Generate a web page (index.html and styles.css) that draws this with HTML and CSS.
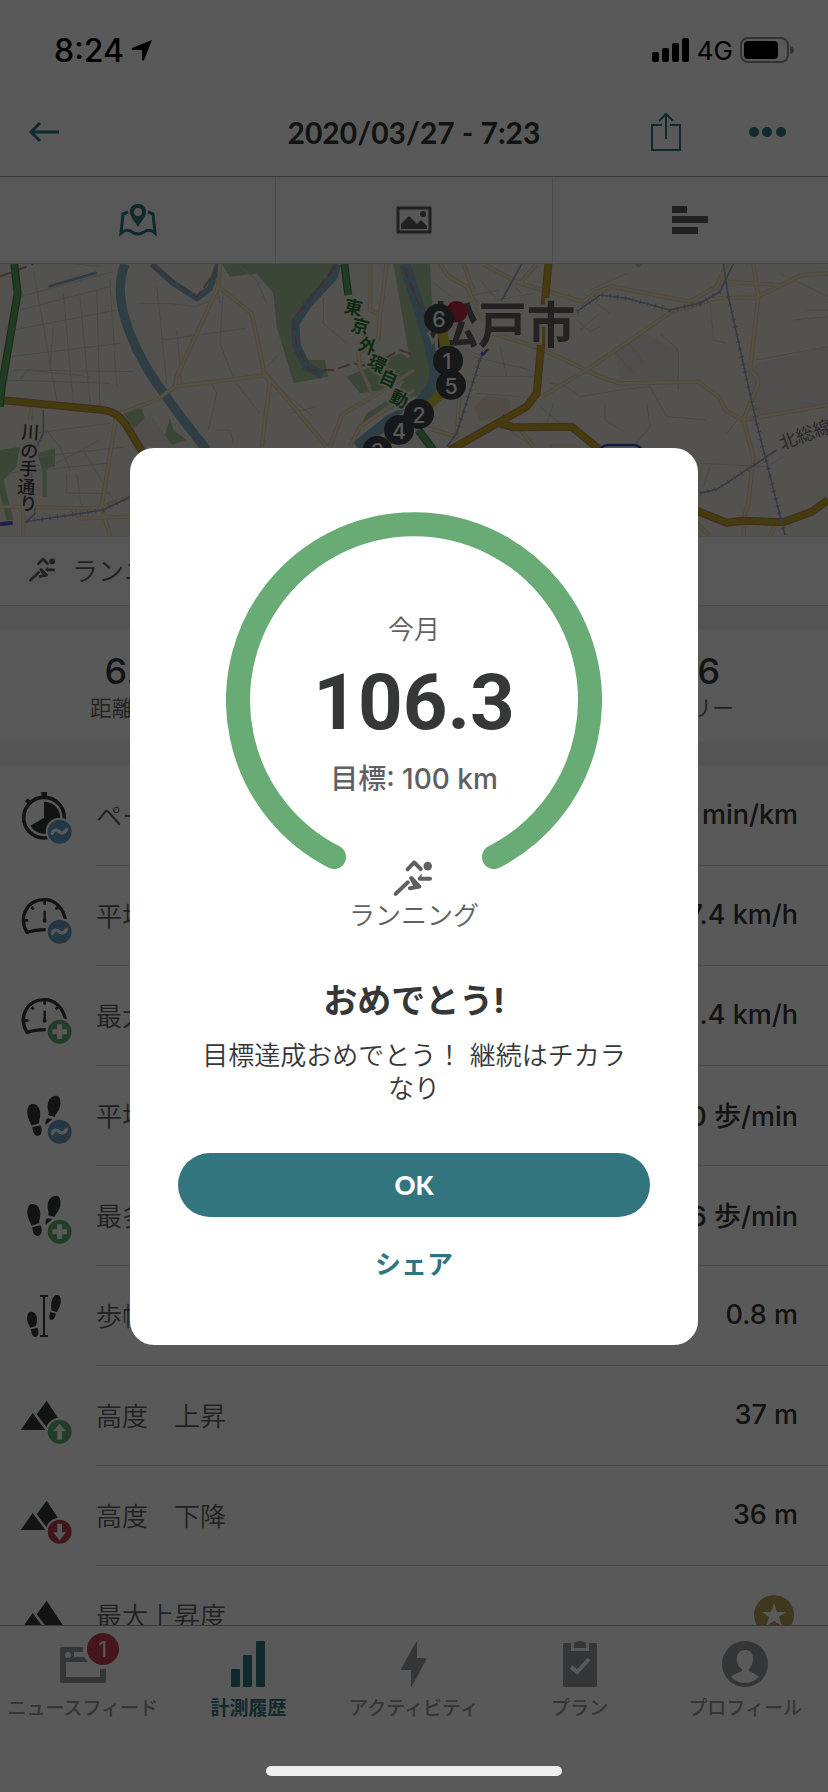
FILE: index.html
```html
<!DOCTYPE html>
<html lang="ja">
<head>
<meta charset="utf-8">
<meta name="viewport" content="width=device-width, initial-scale=1">
<title>2020/03/27 - 7:23</title>
<link rel="stylesheet" href="styles.css">
</head>
<body>
<svg class="defs" aria-hidden="true">
  <defs>
    <symbol id="runner" viewBox="30 24 130 120">
      <g fill="none" stroke="currentColor" stroke-width="12" stroke-linecap="round" stroke-linejoin="round">
        <path d="M77 58 97 37 117 57M114 86H145M41 132 78 97M88 84 113 110 84 115"/>
      </g>
      <path fill="currentColor" d="M108 86 120 70V90ZM82 84 92 80 118 108 86 118 94 108Z"/>
      <circle cx="138" cy="48" r="13" fill="currentColor"/>
    </symbol>
    <symbol id="wave" viewBox="0 0 84 84">
      <circle cx="42" cy="42" r="39" fill="#679dc5" stroke="#fff" stroke-width="6"/>
      <path d="M20 47C22 37 32 35 39 41S56 49 63 35" fill="none" stroke="#fff" stroke-width="10" stroke-linecap="round"/>
    </symbol>
    <symbol id="plus" viewBox="0 0 84 84">
      <circle cx="42" cy="42" r="39" fill="#66ab73" stroke="#fff" stroke-width="6"/>
      <path d="M42 20V64M20 42H64" stroke="#fff" stroke-width="15"/>
    </symbol>
    <symbol id="gauge" viewBox="0 0 162 174">
      <path d="M77 128Q44 129 21 136C-6 91 20 38 74 38 104 38 129 62 136 97" fill="none" stroke="currentColor" stroke-width="10"/>
      <path d="M74 42V53M34 60 41 67M114 60 107 67M14 100H25" stroke="currentColor" stroke-width="8"/>
      <path d="M74 71V101" stroke="currentColor" stroke-width="7"/>
      <circle cx="74" cy="101" r="6" fill="currentColor"/>
    </symbol>
    <symbol id="steps" viewBox="0 0 162 174">
      <g fill="currentColor">
        <path d="M36 51C50 49 60 61 61 80 61 92 57 100 57 109L34 116C31 103 22 95 22 76 22 62 27 52 36 51Z"/>
        <path d="M37 121 61 115C68 126 67 146 53 147 42 147 38 135 37 121Z"/>
        <path d="M109 26C119 27 123 38 121 54 118 72 108 78 104 90L85 85C88 74 81 68 83 53 85 36 96 25 109 26Z"/>
        <path d="M82 94 97 96 77 114C75 106 77 99 82 94Z"/>
      </g>
    </symbol>
    <symbol id="peaks" viewBox="0 0 162 174">
      <path fill="currentColor" d="M2 129 38 78 76 129ZM50 82 80 41 138 129H86Z"/>
    </symbol>
    <path id="lanes" d="M660 12 655 80 530 350 525 380 470 420 360 460M655 80 755 160 795 350 810 365 785 560M525 380 800 345 980 560M1110 12V150L1140 165 1160 12M1140 165 1135 240 1075 280 1080 320 1115 400M990 560 1025 465 1150 390 1242 330M1050 560 1080 500 1242 390M95 440 90 480M350 460 305 740 330 828M0 740 300 745 390 710M210 740 240 775 390 770M70 740V828M25 300 10 400M1320 12 1345 50 1400 80 1450 180M1390 12 1420 90M1450 12 1560 70 1750 125 1790 95 1835 80 2070 125 2150 80 2180 12M1560 70 1610 12M1625 410 1760 330 2015 155 2150 115 2270 112 2405 45 2484 40M2170 65 2340 75M2260 12 2275 110 2250 330 2270 350 2275 370 2230 480 2260 590 2245 730 2235 760 2230 828M1620 265 1800 350 1860 370 2095 365 2155 410 2180 455 2230 480 2484 435M1480 220 1620 265M1285 505 1370 530 1380 380M2090 790 2130 828M2330 790 2310 828M1555 500 1600 560M1650 560 1730 560"/>
    <path id="highways" d="M0 420 310 450Q350 455 375 490L430 580M1645 12 1630 180 1610 400 1580 440 1350 570M1500 490 1540 502 1715 500 1800 570M2060 740 2180 788 2230 782 2350 787 2435 755 2484 720"/>
    <path id="motorways" d="M43 12 53 100 5 380 0 440M1033 12 1045 105M1255 510 1300 570"/>
  </defs>
</svg>

<div class="app">
  <header class="top">
    <div class="status">
      <div class="status-left">
        <span class="clock">8:24</span>
        <svg width="22" height="22" viewBox="0 0 22 22"><path fill="#000" d="M21 1 13 21Q12 22 11 21V11H1Q0 10 1 9Z"/></svg>
      </div>
      <div class="status-right">
        <svg width="38" height="24" viewBox="0 0 38 24"><rect y="14" width="7" height="10" rx="2"/><rect x="10" y="10" width="7" height="14" rx="2"/><rect x="20" y="5" width="7" height="19" rx="2"/><rect x="30" width="7" height="24" rx="2"/></svg>
        <span class="net">4G</span>
        <svg width="54" height="26" viewBox="0 0 54 26"><rect x="1" y="1" width="47" height="24" rx="7" fill="none" stroke="#929292" stroke-width="2"/><rect x="4" y="4" width="34" height="18" rx="4"/><path fill="#929292" d="M50 9Q54 10 54 13T50 17Z"/></svg>
      </div>
    </div>
    <nav class="navbar">
      <button class="icon-btn" aria-label="戻る"><svg width="32" height="22" viewBox="0 0 32 22"><path d="M31 11H3M12 2 3 11 12 20" fill="none" stroke="currentColor" stroke-width="3"/></svg></button>
      <h1 class="title">2020/03/27 - 7:23</h1>
      <div class="actions">
        <button class="icon-btn" aria-label="共有"><svg width="30" height="40" viewBox="0 0 30 40"><path d="M11 13H1V38H29V13H19M15 27V2M8 9 15 2 22 9" fill="none" stroke="currentColor" stroke-width="2"/></svg></button>
        <button class="icon-btn" aria-label="メニュー"><svg width="37" height="12" viewBox="0 0 37 12"><g fill="currentColor"><circle cx="5" cy="6" r="5"/><circle cx="18" cy="6" r="5"/><circle cx="32" cy="6" r="5"/></g></svg></button>
      </div>
    </nav>
  </header>

  <div class="tabs">
    <button class="tab tab-on" aria-label="マップ"><svg width="38" height="34" viewBox="0 0 38 34"><path d="M9 9 4 11 2 30Q8 25 13 29 19 33 25 29 30 25 36 30L34 11 29 9" fill="none" stroke="currentColor" stroke-width="3"/><path fill="currentColor" fill-rule="evenodd" d="M19 1C24 1 27 4 27 9 27 14 21 20 19 24 17 20 11 14 11 9 11 4 14 1 19 1ZM19 5A4 4 0 1 0 19 13 4 4 0 1 0 19 5Z"/></svg></button>
    <button class="tab" aria-label="写真"><svg width="36" height="28" viewBox="0 0 36 28"><rect x="2" y="2" width="32" height="24" fill="none" stroke="currentColor" stroke-width="3"/><circle cx="27" cy="8" r="3" fill="currentColor"/><path fill="currentColor" d="M5 23V18L13 10 21 18 25 14 31 20V23Z"/></svg></button>
    <button class="tab" aria-label="グラフ"><svg width="38" height="28" viewBox="0 0 38 28"><path fill="currentColor" d="M1 0H16V7H1ZM1 10H37V17H1ZM1 21H27V28H1Z"/></svg></button>
  </div>

  <svg class="map" viewBox="0 12 2484 816" preserveAspectRatio="xMidYMid slice" role="img" aria-label="地図">
    <rect y="12" width="2484" height="816" fill="#efebe2"/>
    <g fill="#a9c99c">
      <path d="M665 12H1015L1000 55 925 150 890 210 905 300 975 300 985 350 880 370 860 300 830 200 820 100 770 40 690 50Z"/>
      <path d="M1180 12H1290L1305 300 1290 400 1240 410 1080 500 1100 460 1180 410 1235 330Z"/>
      <path d="M1040 350 1200 280 1240 300V350L1150 390 1080 400Z"/>
      <path d="M370 460 425 445 440 490 400 505ZM490 540 510 475 520 510 560 540 500 560ZM110 580 165 565V620L140 625V710H128V630ZM0 570 60 560 50 620 10 660 30 740 40 780 20 780 0 700ZM1905 12H1930L1915 25Z"/>
    </g>
    <path fill="#e2dfdb" d="M1840 270 1940 220 2035 270V360H1860ZM2270 310 2484 260V430L2270 470 2245 340ZM385 520 450 460 520 560H420Z"/>
    <path fill="#e7d8c8" d="M1420 440 1460 405 1530 420V460L1440 485Z"/>
    <g fill="none" stroke="#d1cdc6" stroke-width="3">
      <path d="M60 110 340 35M60 150 330 80M40 210 350 150M30 290 360 250M40 330 400 335M20 360 330 370M100 30 170 420M190 100 220 430M160 200 150 330M240 110 270 430M290 90 300 440M330 60 350 380M60 360 80 330 270 350M470 80 500 370M530 210 545 370M420 130 510 130 585 140 660 110M490 240 735 205M660 130 640 20M670 90 660 250 700 355M635 372 650 400 625 510M710 370 740 410 780 460M650 510H690L700 550M210 10 300 20M100 520 330 490M130 500 180 560 210 630M20 640 320 610M200 640V700H330M230 640 250 780M150 620 300 540M120 590 380 560M250 570 340 720M970 110V190L1040 250M800 320 850 270M820 370 940 470M870 460 950 440M720 20 770 60 800 130"/>
      <path d="M1290 60 1420 160M1340 30 1440 130 1600 100M1440 60 1560 200M1500 30 1580 120M1400 110 1500 90M1420 290 1590 330M1440 350H1620M1500 260 1520 350M1430 400 1560 410M1330 240 1450 290M1600 520 1640 490 1660 430M1740 210 1800 160M1730 180 1770 215 1800 200M1750 100 1830 160M1770 90 1880 40M1840 270 1900 340M1880 240 1930 310M1980 220 2035 270V390M1940 430 1950 500 1900 560M1650 370 1700 380 1740 410 1860 390 1950 380 2000 470 2120 480M2130 110 2140 240 2180 250M2150 80 2200 60M2270 300 2484 260M2340 40 2484 110M2220 470 2180 520M2300 620 2350 590M2100 610 2300 620M2130 620 2110 680M1500 440 1540 520 1600 560M1620 440 1680 490M1815 430V480L1870 515M2420 150H2484M2380 180 2484 170"/>
    </g>
    <g fill="none" stroke="#87afc6" stroke-linejoin="round">
      <path d="M375 12Q350 70 370 160 400 270 470 370T620 570" stroke-width="28"/>
      <path d="M145 80 290 38" stroke-width="9"/>
      <path d="M455 12 520 70 590 115 630 85 655 12" stroke-width="18"/>
      <path d="M1010 12 1000 50 925 130 885 190 890 260 920 320 970 345" stroke-width="26"/>
      <path d="M1215 12Q1240 90 1265 170T1305 330Q1310 420 1170 480L1070 560" stroke-width="34"/>
    </g>
    <g fill="none" stroke="#b98a88" stroke-width="6" stroke-dasharray="36 14">
      <path d="M0 50 100 12M455 18 590 112 660 15M1005 20 880 180 890 260 930 330 1000 330 1060 310 1110 320 1200 270 1242 285M1210 20 1285 200"/>
    </g>
    <g fill="none" stroke-linejoin="round">
      <use href="#lanes" stroke="#e0c8ac" stroke-width="13"/>
      <use href="#lanes" stroke="#efe4c2" stroke-width="8"/>
      <use href="#highways" stroke="#b98a52" stroke-width="24"/>
      <use href="#highways" stroke="#c8a52c" stroke-width="17"/>
      <use href="#motorways" stroke="#478a4d" stroke-width="24"/>
      <use href="#motorways" stroke="#5fa964" stroke-width="16"/>
    </g>
    <g fill="none" stroke="#9aa6c2" stroke-width="5">
      <path d="M130 450V520L90 600 105 760 80 785 310 750 390 710M1565 12 1500 130M1460 240 1440 300 1370 520 1340 560M1730 155 1800 105 1880 115 2010 150 2100 130 2160 95 2200 12M2170 12 2185 110 2270 490 2355 825M2100 700 2150 688 2270 610 2330 570"/>
      <path stroke-width="14" stroke-dasharray="3 20" d="M80 785 310 750 390 710M1440 300 1370 520M1730 155 1800 105 1880 115 2010 150 2100 130 2160 95M2185 110 2270 490 2355 825M2100 700 2150 688 2270 610"/>
    </g>
    <path fill="none" stroke="#5b62cf" stroke-width="12" d="M0 793 38 788M1445 285 1462 265"/>
    <rect x="1790" y="555" width="145" height="90" rx="36" fill="#e6ebf5" stroke="#2b55bf" stroke-width="7"/>
    <text class="map-city" x="1288" y="250">松戸市</text>
    <g class="map-road">
      <text x="90 87 84 78 84" y="511 567 620 675 725" rotate="3">川の手通り</text>
    </g>
    <g class="map-road map-road-green">
      <text x="1057 1077 1097 1125 1160 1192 1222" y="132 188 243 293 338 398 450" rotate="12 14 20 26 24 26 28">東京外環自動車</text>
    </g>
    <text class="map-rail" transform="rotate(-20 2410 525)" x="2334" y="545">北総線</text>
    <path d="M1320 180 1345 300 1352 375 1255 465 1195 510 1132 575" fill="none" stroke="#cfc534" stroke-width="30"/>
    <circle cx="1370" cy="155" r="32" fill="#bd2b41"/>
    <g fill="#41464a">
      <circle cx="1132" cy="573" r="45"/><circle cx="1197" cy="510" r="45"/><circle cx="1257" cy="462" r="45"/><circle cx="1344" cy="302" r="45"/><circle cx="1353" cy="375" r="45"/><circle cx="1317" cy="176" r="45"/>
    </g>
    <g class="map-pin">
      <text x="1132" y="573">3</text><text x="1197" y="512">4</text><text x="1257" y="464">2</text><text x="1341" y="304">1</text><text x="1353" y="377">5</text><text x="1317" y="178">6</text>
    </g>
  </svg>

  <div class="activity">
    <svg width="29" height="27"><use href="#runner"/></svg>
    <span>ランニング</span>
  </div>

  <dl class="stats">
    <div class="stat"><dd>6.13</dd><dt>距離 (km)</dt></div>
    <div class="stat"></div>
    <div class="stat"><dd>416</dd><dt>カロリー</dt></div>
  </dl>

  <ul class="list">
    <li class="row">
      <svg class="row-icon" viewBox="0 0 162 174"><circle cx="72" cy="92" r="61" fill="none" stroke="currentColor" stroke-width="11"/><path fill="currentColor" d="M64 15H81V34H64ZM72 44A48 48 0 1 1 31 116L72 92Z"/><path d="M19 38 30 49" stroke="currentColor" stroke-width="12"/><use href="#wave" x="77" y="92" width="84" height="84"/></svg>
      <div class="row-body"><span>ペース</span><b>8:07 min/km</b></div>
    </li>
    <li class="row">
      <svg class="row-icon" viewBox="0 0 162 174"><use href="#gauge"/><use href="#wave" x="77" y="92" width="84" height="84"/></svg>
      <div class="row-body"><span>平均速度</span><b>7.4 km/h</b></div>
    </li>
    <li class="row">
      <svg class="row-icon" viewBox="0 0 162 174"><use href="#gauge"/><use href="#plus" x="77" y="92" width="84" height="84"/></svg>
      <div class="row-body"><span>最大速度</span><b>11.4 km/h</b></div>
    </li>
    <li class="row">
      <svg class="row-icon" viewBox="0 0 162 174"><use href="#steps"/><use href="#wave" x="77" y="92" width="84" height="84"/></svg>
      <div class="row-body"><span>平均歩数</span><b>150 歩/min</b></div>
    </li>
    <li class="row">
      <svg class="row-icon" viewBox="0 0 162 174"><use href="#steps"/><use href="#plus" x="77" y="92" width="84" height="84"/></svg>
      <div class="row-body"><span>最多歩数</span><b>176 歩/min</b></div>
    </li>
    <li class="row">
      <svg class="row-icon" viewBox="0 0 162 174"><g fill="currentColor"><path d="M32 74C44 73 52 86 51 99 51 107 48 111 48 117L30 122C28 112 21 108 21 94 21 82 25 75 32 74Z"/><path d="M33 127 52 122C58 134 55 149 46 150 36 149 34 138 33 127Z"/><path d="M111 24C122 24 124 38 122 49 120 61 113 68 111 76L94 70C95 63 92 58 94 47 97 32 103 24 111 24Z"/><path d="M92 75 108 80C105 91 101 98 94 99 86 98 86 84 92 75Z"/></g><path d="M72 27V147M60 27H84M60 147H84" fill="none" stroke="currentColor" stroke-width="6"/></svg>
      <div class="row-body"><span>歩幅</span><b>0.8 m</b></div>
    </li>
    <li class="row">
      <svg class="row-icon" viewBox="0 0 162 174"><use href="#peaks"/><circle cx="119" cy="134" r="39" fill="#66ab73" stroke="#fff" stroke-width="6"/><path fill="#fff" d="M119 110 138 133H126V158H112V133H100Z"/></svg>
      <div class="row-body"><span>高度　上昇</span><b>37 m</b></div>
    </li>
    <li class="row">
      <svg class="row-icon" viewBox="0 0 162 174"><use href="#peaks"/><circle cx="119" cy="134" r="39" fill="#ba3e50" stroke="#fff" stroke-width="6"/><path fill="#fff" d="M119 160 138 136H126V110H112V136H100Z"/></svg>
      <div class="row-body"><span>高度　下降</span><b>36 m</b></div>
    </li>
    <li class="row">
      <svg class="row-icon" viewBox="0 0 162 174"><use href="#peaks"/></svg>
      <div class="row-body"><span>最大上昇度</span><svg class="star" viewBox="0 0 40 40"><circle cx="20" cy="20" r="20" fill="#b89f5a"/><path fill="#fff" d="M20 8 23 17H32L25 22 28 31 20 26 12 31 15 22 8 17H17Z"/></svg></div>
    </li>
  </ul>

  <nav class="tabbar">
    <a class="item" href="#feed"><span class="item-icon"><svg viewBox="0 0 46 46"><path fill="currentColor" fill-rule="evenodd" d="M2 6H44Q46 6 46 8V40Q46 42 44 42H2Q0 42 0 40V8Q0 6 2 6ZM6 21V36H40V21ZM14 11V16H40V11Z"/><circle cx="8" cy="14" r="3" fill="#fff"/></svg><em class="badge">1</em></span>ニュースフィード</a>
    <a class="item item-on" href="#history"><span class="item-icon"><svg viewBox="0 0 46 46"><g fill="currentColor"><rect x="6" y="28" width="9" height="18" rx="1"/><rect x="18" y="14" width="9" height="32" rx="1"/><rect x="31" width="9" height="46" rx="1"/></g></svg></span>計測履歴</a>
    <a class="item" href="#activity"><span class="item-icon"><svg viewBox="0 0 46 46"><path fill="currentColor" d="M25 1 10 28Q10 29 11 29H20V45Q20 46 21 45L35 19Q36 17 34 17H26V1Z"/></svg></span>アクティビティ</a>
    <a class="item" href="#plan"><span class="item-icon"><svg viewBox="0 0 46 46"><path fill="currentColor" d="M8 2H14V10H32V2H38Q40 2 40 4V44Q40 46 38 46H8Q6 46 6 44V4Q6 2 8 2ZM17 2Q23-2 29 2V7H17Z"/><path d="M14 26 20 31 32 18" fill="none" stroke="#fff" stroke-width="4"/></svg></span>プラン</a>
    <a class="item" href="#profile"><span class="item-icon"><svg viewBox="0 0 46 46"><circle cx="23" cy="23" r="23" fill="currentColor"/><path fill="#fff" d="M23 9C29 9 31 13 31 18 31 23 29 26 27 28V30Q32 32 37 36 31 42 23 42T9 36Q14 32 20 30V28C17 26 15 23 15 18 15 13 17 9 23 9Z"/></svg></span>プロフィール</a>
  </nav>
</div>

<div class="overlay">
  <section class="modal" role="dialog" aria-modal="true" aria-labelledby="dlg-title">
    <div class="goal">
      <svg class="ring" viewBox="0 0 376 376"><path d="M108 345A176 176 0 1 1 268 345" fill="none" stroke="#69ab74" stroke-width="24" stroke-linecap="round"/></svg>
      <div class="goal-text">
        <p class="month">今月</p>
        <p class="amount">106.3</p>
        <p class="target">目標: 100 km</p>
        <svg class="goal-icon" width="43" height="40"><use href="#runner"/></svg>
        <p class="sport">ランニング</p>
      </div>
    </div>
    <h2 id="dlg-title">おめでとう!</h2>
    <p class="message">目標達成おめでとう！ 継続はチカラなり</p>
    <button class="ok">OK</button>
    <button class="share">シェア</button>
  </section>
</div>
<div class="home-bar"></div>
</body>
</html>
```
FILE: styles.css
```css
* { box-sizing: border-box; margin: 0; padding: 0; }

body {
  font-family: Inter, "Noto Sans CJK JP", sans-serif;
  color: #363738;
  background: #fff;
}

button { border: 0; background: none; font: inherit; color: inherit; }
.defs { position: absolute; width: 0; height: 0; }

.app { display: flex; flex-direction: column; height: 100vh; overflow: hidden; }

.top { flex: none; border-bottom: 1px solid #a4a4a4; }
.status {
  display: flex;
  justify-content: space-between;
  align-items: center;
  height: 88px;
  padding: 12px 34px 0 54px;
  color: #000;
}
.status-left, .status-right { display: flex; align-items: center; gap: 7px; }
.clock { font-size: 32px; font-weight: 500; }
.net { font-size: 26px; }

.navbar {
  display: grid;
  grid-template-columns: 1fr auto 1fr;
  align-items: center;
  height: 88px;
  padding: 0 28px;
}
.icon-btn { display: flex; color: #30757f; }
.title { font-family: Lato, Inter, sans-serif; font-size: 30px; font-weight: 700; }
.actions { display: flex; justify-content: flex-end; align-items: center; gap: 68px; padding-right: 14px; }

.tabs { flex: none; display: flex; height: 87px; background: #f8f8f8; border-bottom: 1px solid #cacaca; }
.tab { flex: 1; display: flex; align-items: center; justify-content: center; color: #5f6062; }
.tab + .tab { border-left: 1px solid #dadada; }
.tab-on { color: #30757f; }

.map { flex: none; display: block; width: 100%; height: 272px; }
.map text { font-family: "Noto Sans CJK JP", sans-serif; stroke: #efebe2; paint-order: stroke; }
.map-city { font-size: 146px; font-weight: 700; fill: #66625c; stroke-width: 16px; }
.map-road { font-size: 54px; font-weight: 500; fill: #444; stroke-width: 10px; text-anchor: middle; dominant-baseline: central; }
.map-road-green { font-weight: 700; fill: #2a7d33; }
.map-rail { font-size: 54px; fill: #77757c; stroke-width: 10px; }
.map .map-pin text { font-family: Inter, sans-serif; font-size: 64px; font-weight: 500; fill: #fff; stroke: none; text-anchor: middle; dominant-baseline: central; }

.activity {
  flex: none;
  display: flex;
  align-items: center;
  gap: 15px;
  height: 70px;
  padding: 0 28px 4px;
  border-top: 1px solid #dadada;
  border-bottom: 1px solid #dadada;
  background: #f8f8f8;
  color: #5f6062;
  font-size: 26px;
  font-weight: 350;
}

.stats {
  flex: none;
  display: flex;
  height: 160px;
  border-top: 24px solid #f1f1f1;
  border-bottom: 24px solid #f1f1f1;
}
.stat { flex: 1; text-align: center; padding-top: 20px; }
.stat dd { font-size: 36px; font-weight: 500; line-height: 42px; }
.stat dt { color: #5f6062; font-size: 22px; font-weight: 350; line-height: 32px; }

.list { flex: 1; min-height: 0; overflow: hidden; list-style: none; }
.row { display: flex; align-items: center; gap: 22px; height: 100px; padding-left: 20px; }
.row-icon { flex: none; width: 54px; height: 58px; }
.row-body {
  flex: 1;
  display: flex;
  justify-content: space-between;
  align-items: center;
  height: 100px;
  padding: 0 30px 2px 0;
  border-bottom: 1px solid #d0d0d0;
}
.row-body span { color: #5f6062; font-size: 26px; font-weight: 350; }
.row-body b { font-size: 27px; font-weight: 500; }
.star { width: 40px; height: 40px; margin-right: 4px; }

.tabbar {
  flex: none;
  display: flex;
  height: 167px;
  padding-top: 15px;
  border-top: 1px solid #a4a4a4;
  background: #fff;
}
.item {
  flex: 1 0 0;
  min-width: 0;
  display: flex;
  flex-direction: column;
  align-items: center;
  gap: 8px;
  color: #96989a;
  font-size: 19px;
  font-weight: 500;
  line-height: 28px;
  text-decoration: none;
  white-space: nowrap;
}
.item-on { color: #30757f; font-weight: 700; }
.item-icon { position: relative; display: block; width: 46px; height: 46px; }
.item-icon svg { display: block; width: 46px; height: 46px; }
.badge {
  position: absolute;
  top: -12px;
  right: -17px;
  width: 40px;
  height: 40px;
  border: 4px solid #fff;
  border-radius: 20px;
  background: #c33e50;
  color: #fff;
  font-size: 22px;
  font-style: normal;
  font-weight: 400;
  line-height: 32px;
  text-align: center;
}

.overlay {
  position: fixed;
  inset: 0;
  display: flex;
  align-items: center;
  justify-content: center;
  background: rgba(0, 0, 0, .65);
}
.modal {
  display: flex;
  flex-direction: column;
  align-items: center;
  width: calc(100% - 260px);
  max-width: 640px;
  padding: 64px 48px 62px;
  border-radius: 24px;
  background: #fff;
  text-align: center;
}
.goal { display: grid; justify-items: center; }
.goal > * { grid-area: 1 / 1; }
.ring { width: 376px; height: 376px; }
.goal-text { display: flex; flex-direction: column; align-items: center; padding-top: 102px; color: #5f6062; }
.month { font-size: 26px; font-weight: 350; line-height: 32px; }
.amount { color: #363738; font-family: Roboto, sans-serif; font-size: 78px; font-weight: 700; line-height: 88px; margin: 13px 0; }
.target { font-size: 28px; font-weight: 500; line-height: 38px; }
.goal-icon { margin-top: 60px; }
.sport { font-size: 26px; font-weight: 350; line-height: 36px; }
.modal h2 { margin-top: 45px; font-size: 34px; font-weight: 700; line-height: 44px; }
.message { padding: 0 18px; margin-top: 16px; font-size: 26px; font-weight: 350; line-height: 33px; }
.ok {
  width: 100%;
  height: 64px;
  margin-top: 48px;
  border-radius: 32px;
  background: #33757f;
  color: #fff;
  font-family: Lato, Inter, sans-serif;
  font-size: 26px;
  font-weight: 900;
}
.share { margin-top: 30px; color: #30757f; font-size: 26px; font-weight: 700; line-height: 36px; }

.home-bar {
  position: fixed;
  bottom: 16px;
  left: 50%;
  width: 296px;
  height: 10px;
  margin-left: -148px;
  border-radius: 5px;
  background: #eee;
}
```
